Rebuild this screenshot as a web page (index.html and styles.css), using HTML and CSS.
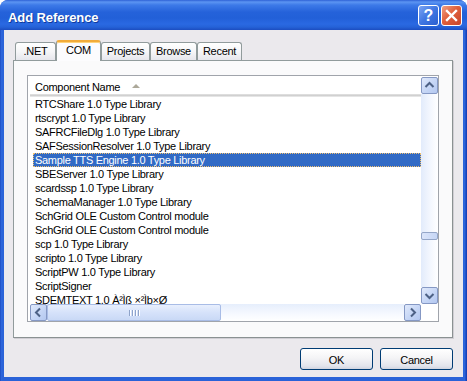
FILE: index.html
```html
<!DOCTYPE html>
<html>
<head>
<meta charset="utf-8">
<link rel="stylesheet" href="styles.css">
</head>
<body>
<div class="window">
  <div class="titlebar">
    <span class="title">Add Reference</span>
    <div class="caption-buttons">
      <span class="cap-btn help">?</span>
      <span class="cap-btn close"><svg width="19" height="19" viewBox="0 0 19 19"><path d="M5 5 L14 14 M14 5 L5 14" stroke="#fff" stroke-width="2.4" stroke-linecap="square"/></svg></span>
    </div>
  </div>
  <div class="client">
    <div class="tabs">
      <div class="tab t-net">.NET</div>
      <div class="tab active t-com">COM</div>
      <div class="tab t-proj">Projects</div>
      <div class="tab t-browse">Browse</div>
      <div class="tab t-recent">Recent</div>
    </div>
    <div class="panel">
      <div class="listview">
        <div class="lv-main">
          <div class="lv-header">
            <span>Component Name</span>
            <svg class="sort" width="8" height="5" viewBox="0 0 8 5"><path d="M0 5 L4 1 L8 5 Z" fill="#aca899"/></svg>
          </div>
          <div class="lv-rows">
            <div class="row">RTCShare 1.0 Type Library</div>
            <div class="row">rtscrypt 1.0 Type Library</div>
            <div class="row">SAFRCFileDlg 1.0 Type Library</div>
            <div class="row">SAFSessionResolver 1.0 Type Library</div>
            <div class="row selected">Sample TTS Engine 1.0 Type Library</div>
            <div class="row">SBEServer 1.0 Type Library</div>
            <div class="row">scardssp 1.0 Type Library</div>
            <div class="row">SchemaManager 1.0 Type Library</div>
            <div class="row">SchGrid OLE Custom Control module</div>
            <div class="row">SchGrid OLE Custom Control module</div>
            <div class="row">scp 1.0 Type Library</div>
            <div class="row">scripto 1.0 Type Library</div>
            <div class="row">ScriptPW 1.0 Type Library</div>
            <div class="row">ScriptSigner</div>
            <div class="row">SDEMTEXT 1.0 À²Ìß ×²Ìþ×Ø</div>
          </div>
        </div>
        <div class="vscroll">
          <div class="sb-btn"><svg width="15" height="15" viewBox="0 0 15 15"><path d="M3.5 9 L7.5 5 L11.5 9" fill="none" stroke="#4d6185" stroke-width="2"/></svg></div>
          <div class="vtrack"><div class="vthumb"></div></div>
          <div class="sb-btn"><svg width="15" height="15" viewBox="0 0 15 15"><path d="M3.5 6 L7.5 10 L11.5 6" fill="none" stroke="#4d6185" stroke-width="2"/></svg></div>
        </div>
        <div class="hscroll">
          <div class="sb-btn"><svg width="15" height="15" viewBox="0 0 15 15"><path d="M9 3.5 L5 7.5 L9 11.5" fill="none" stroke="#4d6185" stroke-width="2"/></svg></div>
          <div class="htrack">
            <div class="hthumb"><span class="grip"></span><span class="grip"></span><span class="grip"></span><span class="grip"></span></div>
          </div>
          <div class="sb-btn"><svg width="15" height="15" viewBox="0 0 15 15"><path d="M6 3.5 L10 7.5 L6 11.5" fill="none" stroke="#4d6185" stroke-width="2"/></svg></div>
        </div>
        <div class="corner"></div>
      </div>
    </div>
    <div class="buttons">
      <div class="btn">OK</div>
      <div class="btn">Cancel</div>
    </div>
  </div>
</div>
</body>
</html>
```
FILE: styles.css
```css
* { box-sizing: border-box; }
html, body { margin: 0; padding: 0; }
body {
  width: 467px;
  height: 381px;
  overflow: hidden;
  background: #ffffff;
  font-family: "Liberation Sans", Arial, sans-serif;
  font-size: 11px;
  letter-spacing: -0.3px;
  color: #000;
}
.window {
  width: 467px;
  height: 381px;
  display: flex;
  flex-direction: column;
  border-radius: 8px 8px 0 0;
  background: linear-gradient(to right, #1741b8 0, #2d66dc 1px, #2a62d8 3px, #2a62d8 463px, #2d66dc 465px, #1741b8 466px);
}
.titlebar {
  height: 30px;
  flex: none;
  display: flex;
  justify-content: space-between;
  align-items: flex-start;
  padding: 0 5px 0 8px;
  border-radius: 8px 8px 0 0;
  background: linear-gradient(#2e62d6 0, #5c95f2 2px, #3d7ae8 5px, #2562da 12px, #2260d8 18px, #2a69e2 24px, #2562d8 27px, #1c4dc0 30px);
}
.title {
  margin-top: 10px;
  line-height: 16px;
  font-size: 13px;
  font-weight: bold;
  color: #fff;
  letter-spacing: -0.1px;
  text-shadow: 1px 1px 0 #0f3a9c;
}
.caption-buttons {
  margin-top: 5px;
  display: flex;
  gap: 2px;
}
.cap-btn {
  width: 21px;
  height: 21px;
  border: 1px solid #ffffff;
  border-radius: 3px;
  display: flex;
  align-items: center;
  justify-content: center;
  color: #fff;
}
.help {
  background: linear-gradient(135deg, #7ba4f2, #3f76e2 50%, #2b5fd0);
  font-size: 16px;
  font-weight: bold;
  letter-spacing: 0;
  line-height: 19px;
}
.close {
  background: linear-gradient(135deg, #f0a085, #e0603c 45%, #c8452a);
}
.client {
  flex: 1;
  margin: 0 4px 4px;
  background: #ebe9ed;
  padding: 10px 10px 0 9px;
  display: flex;
  flex-direction: column;
}
.tabs {
  display: flex;
  height: 21px;
  margin: 0 0 -1px 2px;
  position: relative;
  z-index: 2;
  align-items: flex-start;
}
.tab {
  height: 18px;
  margin-top: 2px;
  border: 1px solid #919b9c;
  border-bottom: none;
  border-radius: 3px 3px 0 0;
  background: linear-gradient(#ffffff, #f6f6f8 50%, #e6e6ec);
  text-align: center;
  line-height: 17px;
}
.tab.active {
  height: 21px;
  margin-top: 0;
  background: #fcfcfe;
  border-top: 2px solid #f2ac3a;
  box-shadow: inset 0 1px 0 #ffd37a;
  padding-top: 1px;
  line-height: 14px;
}
.t-net { width: 41px; }
.t-com { width: 45px; }
.t-proj { width: 49px; }
.t-browse { width: 47px; }
.t-recent { width: 45px; }
.panel {
  width: 440px;
  height: 278px;
  border: 1px solid #919b9c;
  border-right-color: #8a9192;
  border-bottom-color: #8a9192;
  background: #fafafb;
  padding: 14px 0 0 13px;
  box-shadow: 1px 1px 0 #d0ced4;
}
.listview {
  width: 412px;
  height: 247px;
  border: 1px solid #a0a4ab;
  background: #ffffff;
  padding: 1px 0 0 2px;
  display: grid;
  grid-template-columns: 391px 17px;
  grid-template-rows: 227px 17px;
}
.lv-main {
  overflow: hidden;
}
.lv-header {
  height: 20px;
  display: flex;
  align-items: center;
  padding: 0 0 1px 5px;
  background: linear-gradient(#ffffff 0, #ffffff 17px, #e4e4e4 17px, #d6d6d6 18px, #cbcbcb 19px, #ffffff 20px);
}
.lv-header span {
  line-height: 14px;
}
.sort {
  margin-left: 12px;
  margin-top: -2px;
}
.lv-rows {
  display: flex;
  flex-direction: column;
}
.row {
  height: 14px;
  line-height: 14px;
  margin-left: 3px;
  padding-left: 2px;
  white-space: nowrap;
  flex: none;
}
.row.selected {
  background: #316ac5;
  color: #fff;
  outline: 1px dotted #f0c070;
  outline-offset: -1px;
}
.vscroll {
  display: flex;
  flex-direction: column;
}
.sb-btn {
  width: 17px;
  height: 17px;
  flex: none;
  border: 1px solid #8598c4;
  border-radius: 2px;
  background: linear-gradient(135deg, #e0e9fb, #c3d4f5 60%, #b4c8f0);
  display: flex;
  align-items: center;
  justify-content: center;
}
.vtrack {
  flex: 1;
  background: linear-gradient(90deg, #e2ebfb, #f2f6fe 50%, #ffffff);
  padding-top: 138px;
}
.vthumb {
  height: 8px;
  border: 1px solid #94a6c8;
  border-radius: 2px;
  background: linear-gradient(90deg, #dbe5fa, #c6d6f5);
}
.hscroll {
  display: flex;
}
.htrack {
  flex: 1;
  background: linear-gradient(#e6eefc, #f6f9ff 60%, #ffffff);
}
.hthumb {
  width: 174px;
  height: 17px;
  border: 1px solid #a8bce6;
  border-radius: 2px;
  background: linear-gradient(#e8effd, #d6e2fa 50%, #c9d9f6);
  display: flex;
  justify-content: center;
  align-items: center;
  gap: 1px;
}
.grip {
  width: 1px;
  height: 6px;
  background: #8ea3c9;
  box-shadow: 1px 0 0 #ffffff;
}
.grip + .grip { margin-left: 1px; }
.corner {
  background: #ffffff;
}
.buttons {
  margin-top: 10px;
  display: flex;
  justify-content: flex-end;
  gap: 7px;
}
.btn {
  width: 73px;
  height: 22px;
  border: 1px solid #003c74;
  border-radius: 3px;
  background: linear-gradient(#ffffff, #f4f4f6 45%, #e2e4ec 85%, #d0d4e0);
  text-align: center;
  line-height: 20px;
  padding-top: 1px;
}
```
